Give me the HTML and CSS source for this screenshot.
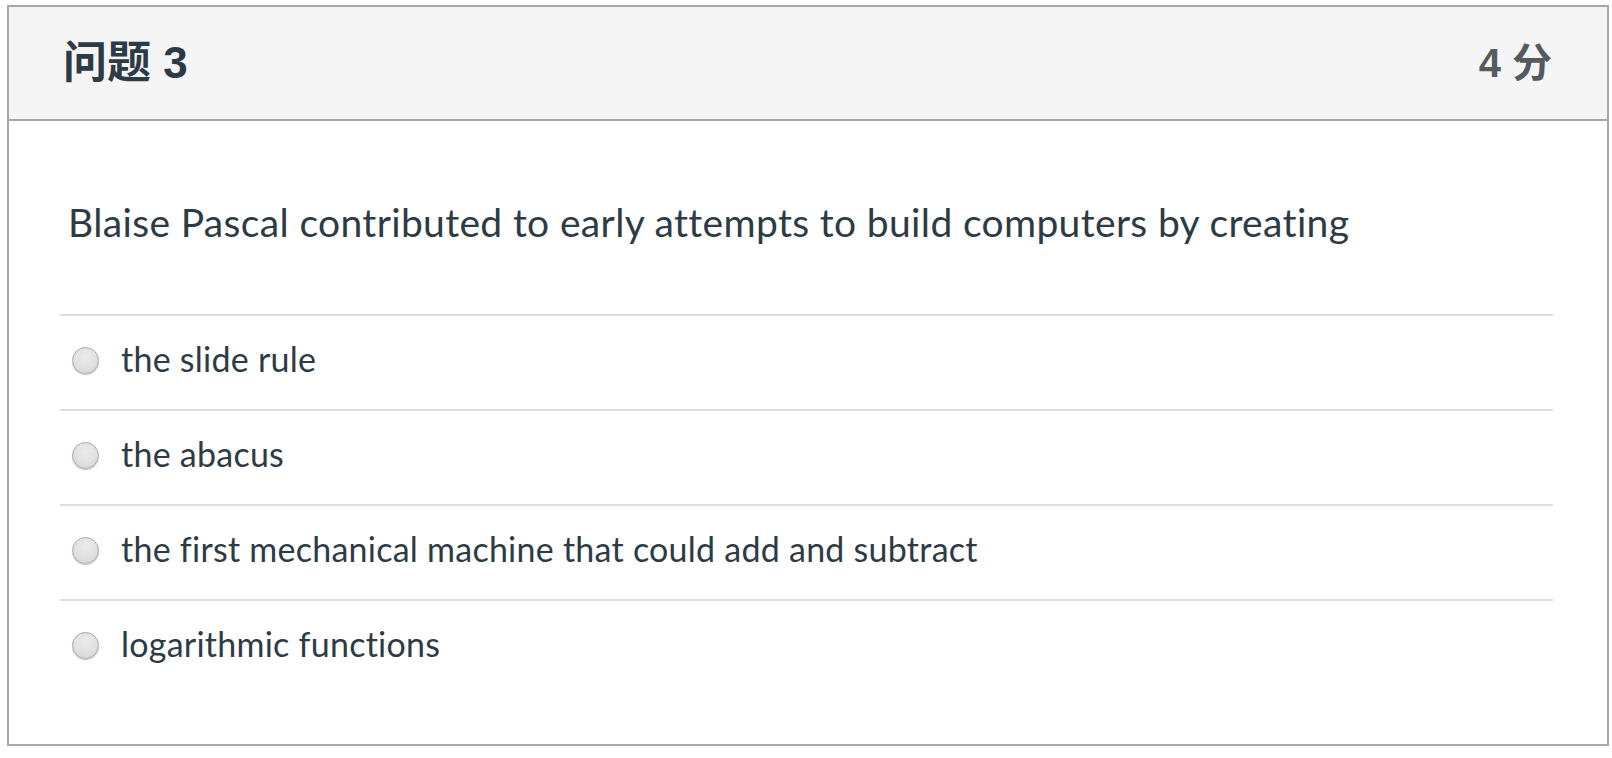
FILE: index.html
```html
<!DOCTYPE html>
<html lang="zh">
<head>
<meta charset="utf-8">
<title>问题 3</title>
<link rel="stylesheet" href="styles.css">
</head>
<body>
<div class="card">
  <div class="card-header">
    <div class="title">问题 3</div>
    <div class="points">4 分</div>
  </div>
  <div class="card-body">
    <div class="question">Blaise Pascal contributed to early attempts to build computers by creating</div>
    <div class="answers">
      <label class="answer"><span class="radio"></span><span class="answer-text">the slide rule</span></label>
      <label class="answer"><span class="radio"></span><span class="answer-text">the abacus</span></label>
      <label class="answer"><span class="radio"></span><span class="answer-text">the first mechanical machine that could add and subtract</span></label>
      <label class="answer"><span class="radio"></span><span class="answer-text">logarithmic functions</span></label>
    </div>
  </div>
</div>
</body>
</html>
```
FILE: styles.css
```css
html, body {
  margin: 0;
  padding: 0;
  background: #ffffff;
}
body {
  padding: 5px 0 0 7px;
}
.card {
  width: 1602px;
  box-sizing: border-box;
  border: 2px solid #a8a8a8;
  background: #ffffff;
}
.card-header {
  height: 114px;
  box-sizing: border-box;
  background: #f5f5f5;
  border-bottom: 2px solid #a8a8a8;
  display: flex;
  align-items: center;
  justify-content: space-between;
  padding: 0 55px 0 54px;
  font-family: "Liberation Sans", "Noto Sans CJK SC", sans-serif;
  font-weight: bold;
}
.title {
  font-size: 44px;
  color: #2d3b45;
  line-height: 1;
}
.points {
  font-size: 40px;
  color: #555a5e;
  line-height: 1;
}
.card-body {
  padding: 80px 54px 50px 51px;
  font-family: Lato, "Noto Sans", sans-serif;
  color: #2d3b45;
}
.question {
  font-size: 39px;
  letter-spacing: 0.35px;
  line-height: 43px;
  padding-left: 8px;
  margin-bottom: 70px;
}
.answers {
  display: flex;
  flex-direction: column;
}
.answer {
  display: flex;
  align-items: center;
  border-top: 2px solid #dddddd;
  padding: 24px 0 31px 0;
}
.radio {
  width: 27px;
  height: 27px;
  box-sizing: border-box;
  border-radius: 50%;
  border: 1px solid #a9a9a9;
  background: radial-gradient(circle at 50% 35%, #ececec 0%, #e0e0e0 55%, #d2d2d2 100%);
  box-shadow: 0 1px 1px rgba(0, 0, 0, 0.25);
  margin: 3px 22px 0 12px;
  flex: none;
}
.answer-text {
  font-size: 34px;
  letter-spacing: 0.25px;
  line-height: 38px;
}
```
